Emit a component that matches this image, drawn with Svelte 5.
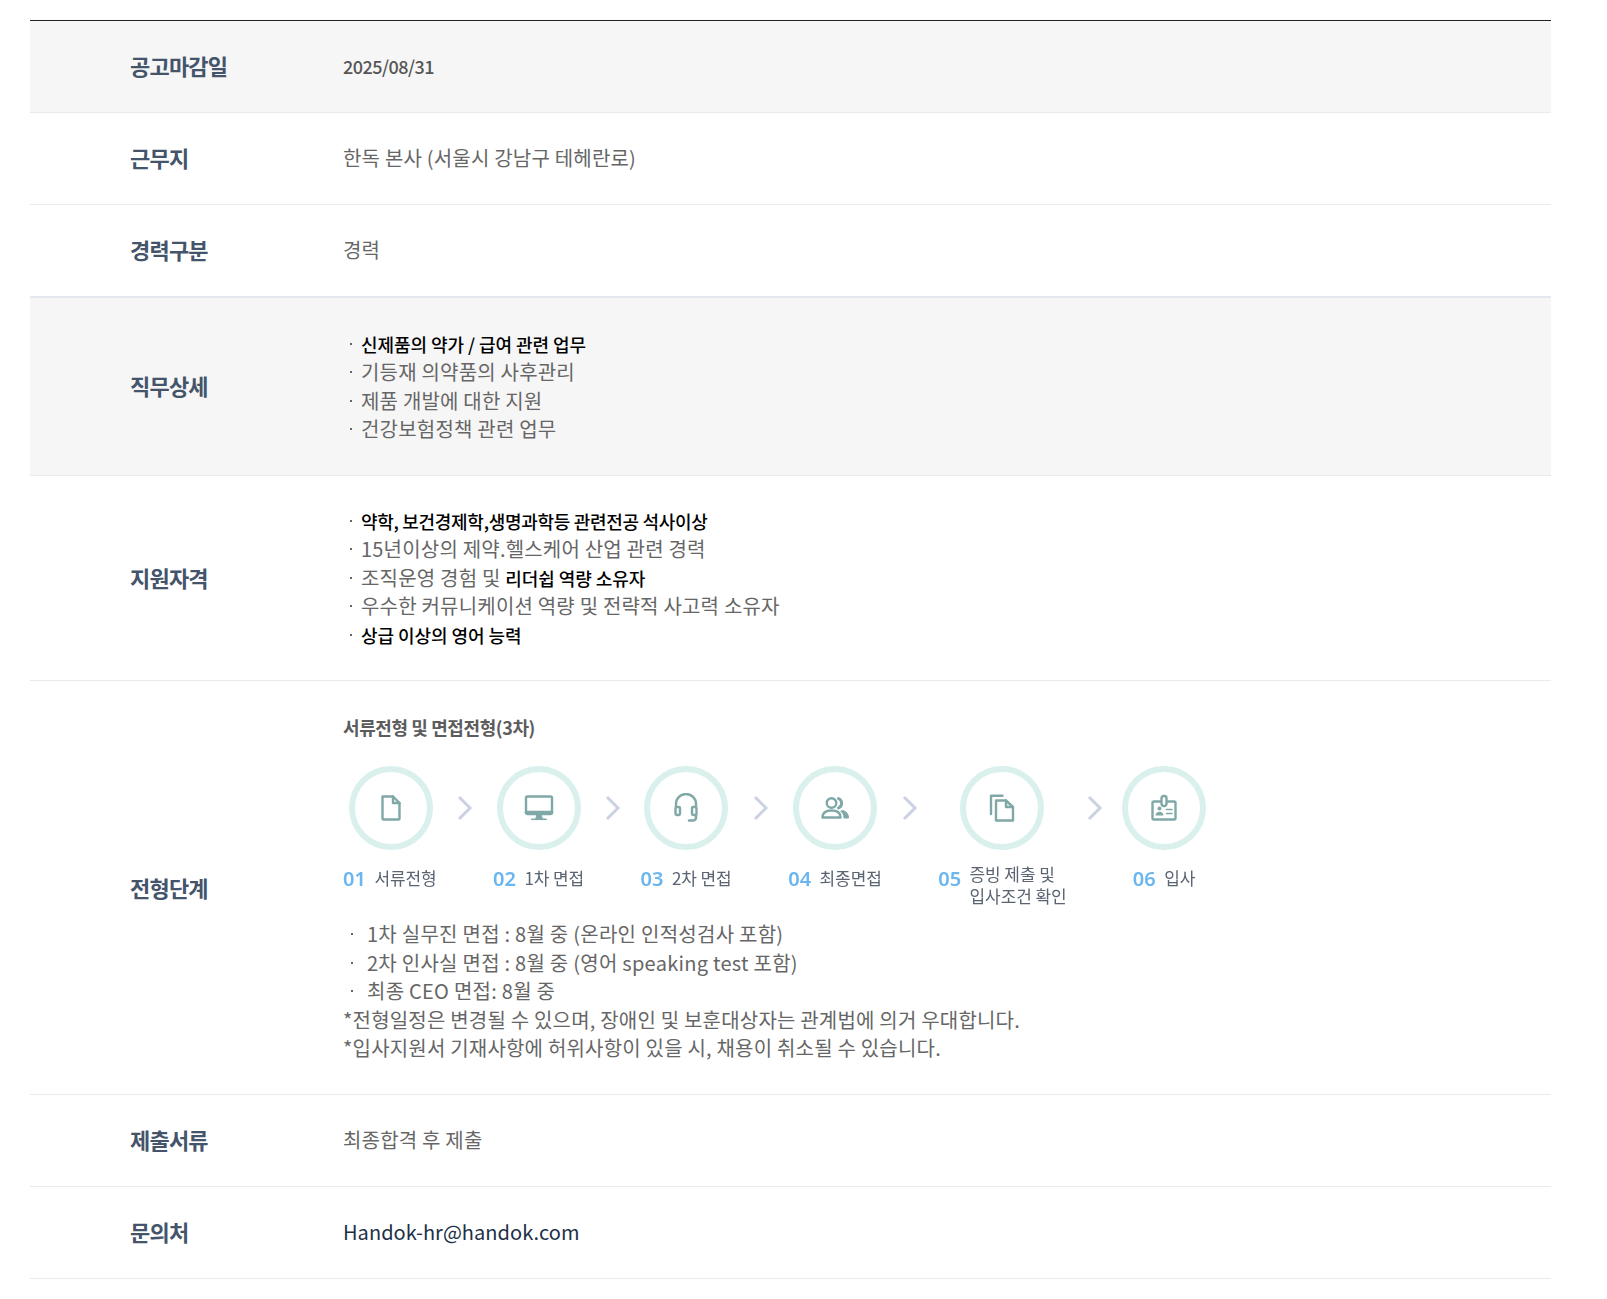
<script>
  const steps = [
    { n: '01', t: ['서류전형'], icon: 'doc', w: 150, off: 5.5, chev: 24.5 },
    { n: '02', t: ['1차 면접'], icon: 'monitor', w: 147.6, off: 4, chev: 24 },
    { n: '03', t: ['2차 면접'], icon: 'head', w: 147.6, off: 3.5, chev: 24.5 },
    { n: '04', t: ['최종면접'], icon: 'people', w: 150, off: 5, chev: 25 },
    { n: '05', t: ['증빙 제출 및', '입사조건 확인'], icon: 'docs', w: 194.6, off: 22, chev: 43 },
    { n: '06', t: ['입사'], icon: 'badge', w: 120, off: -10.4, chev: 0 }
  ];
</script>

<div class="page">
  <div class="table">
    <div class="row gray h92">
      <div class="label">공고마감일</div>
      <div class="value date">2025/08/31</div>
    </div>
    <div class="row h92">
      <div class="label">근무지</div>
      <div class="value">한독 본사 (서울시 강남구 테헤란로)</div>
    </div>
    <div class="row h93 strong-line">
      <div class="label">경력구분</div>
      <div class="value">경력</div>
    </div>
    <div class="row gray duty">
      <div class="label">직무상세</div>
      <div class="value list">
        <div class="li"><b>신제품의 약가 / 급여 관련 업무</b></div>
        <div class="li">기등재 의약품의 사후관리</div>
        <div class="li">제품 개발에 대한 지원</div>
        <div class="li">건강보험정책 관련 업무</div>
      </div>
    </div>
    <div class="row qual">
      <div class="label">지원자격</div>
      <div class="value list">
        <div class="li"><b class="tight">약학, 보건경제학,생명과학등 관련전공 석사이상</b></div>
        <div class="li">15년이상의 제약.헬스케어 산업 관련 경력</div>
        <div class="li">조직운영 경험 및 <b>리더쉽 역량 소유자</b></div>
        <div class="li">우수한 커뮤니케이션 역량 및 전략적 사고력 소유자</div>
        <div class="li"><b>상급 이상의 영어 능력</b></div>
      </div>
    </div>
    <div class="row process">
      <div class="label">전형단계</div>
      <div class="value proc-value">
        <div class="proc-title">서류전형 및 면접전형(3차)</div>
        <div class="steps">
          {#each steps as s, i}
            <div class="step" style="width:{s.w}px">
              <div class="top" style="margin-left:{s.off}px">
                <div class="circle">
                  <svg width="30" height="30" viewBox="0 0 30 30" fill="none" stroke="#7fa8a6" stroke-width="2.4" stroke-linejoin="round" stroke-linecap="round">
                    {#if s.icon === 'doc'}
                      <path d="M6.5 3.5h10.500l6.500 6.500v15.500a1 1 0 0 1-1 1h-15a1 1 0 0 1-1-1z" /><path d="M17 3.500v6.500h6.500" />
                    {:else if s.icon === 'monitor'}
                      <rect x="2" y="3.500" width="26" height="17.500" rx="1.500" /><path d="M2.500 19.500h25" stroke-width="3.600" /><path d="M13 22h4l1.500 4h4v.6h-15v-.6h4z" fill="#7fa8a6" stroke-width="1" />
                    {:else if s.icon === 'head'}
                      <path d="M5 14v-3a10 10 0 0 1 20 0v3" /><rect x="4.500" y="14" width="4.500" height="8" rx="1.200" /><rect x="21" y="14" width="4.500" height="8" rx="1.200" /><path d="M25 22v2.500a3 3 0 0 1-3 3h-4" stroke-width="2.600" />
                    {:else if s.icon === 'people'}
                      <circle cx="11.500" cy="10" r="4.800" /><path d="M2.500 24.500c0-5 3.500-7 9-7s9 2 9 7z" /><path d="M18.500 5.500a5.200 5.200 0 0 1 0 9.500" stroke-width="3" /><path d="M23 17.500c3.500 1.200 5.500 3.500 5.500 7.500h-4.500c0-3-1-5.500-3-6.500z" fill="#7fa8a6" stroke-width="1" />
                    {:else if s.icon === 'docs'}
                      <path d="M4 21V2.800h11.500" /><path d="M9 7.500h10l7 6.500v13.500H9z" /><path d="M19 7.500V14h7" />
                    {:else}
                      <rect x="3.500" y="8.500" width="23" height="18" rx="1.500" /><rect x="12.500" y="3" width="5" height="10" rx="2.200" fill="#fff" /><circle cx="10.500" cy="15.500" r="2" fill="#7fa8a6" stroke="none" /><path d="M6.500 22.500c0-5 8-5 8 0z" fill="#7fa8a6" stroke="none" /><path d="M17.500 16.500h5.500M17.500 20.500h5.500" stroke-width="1.600" />
                    {/if}
                  </svg>
                </div>
                {#if i < 5}
                  <svg class="chev" style="margin-left:{s.chev}px" width="16" height="26" viewBox="0 0 16 26" fill="none"><path d="M2 2l11 11L2 24" stroke="#cbd2e4" stroke-width="3" /></svg>
                {/if}
              </div>
              <div class="cap">
                <span class="num">{s.n}</span>
                <span class="txt" class:single={s.t.length === 1}>{#each s.t as l}<span class="ln">{l}</span>{/each}</span>
              </div>
            </div>
          {/each}
        </div>
        <div class="notes">
          <div class="note">1차 실무진 면접 : 8월 중 (온라인 인적성검사 포함)</div>
          <div class="note">2차 인사실 면접 : 8월 중 (영어 speaking test 포함)</div>
          <div class="note">최종 CEO 면접: 8월 중</div>
          <div>*전형일정은 변경될 수 있으며, 장애인 및 보훈대상자는 관계법에 의거 우대합니다.</div>
          <div>*입사지원서 기재사항에 허위사항이 있을 시, 채용이 취소될 수 있습니다.</div>
        </div>
      </div>
    </div>
    <div class="row h92">
      <div class="label">제출서류</div>
      <div class="value">최종합격 후 제출</div>
    </div>
    <div class="row h92">
      <div class="label">문의처</div>
      <div class="value mail">Handok-hr@handok.com</div>
    </div>
  </div>
</div>

<style>
  :global(body) { background: #fff; }
  .page {
    padding: 20px 56px 20px 30px;
    font-family: "Noto Sans CJK KR", "Noto Sans", sans-serif;
    color: #666;
  }
  .table { border-top: 1px solid #222; }
  .row {
    display: flex;
    align-items: center;
    border-bottom: 1px solid #e8eaef;
    box-sizing: border-box;
  }
  .gray { background: #f6f6f6; }
  .h92 { height: 92px; }
  .h93 { height: 93px; }
  .strong-line { border-bottom: 2px solid #e4e7ef; }
  .duty { height: 178px; }
  .qual { height: 205px; }
  .process { height: 414px; }
  .label {
    width: 313px;
    flex: none;
    box-sizing: border-box;
    padding: 0 0 3px 100px;
    font-size: 22px;
    font-weight: 700;
    letter-spacing: -0.8px;
    color: #44546a;
  }
  .process .label { padding-bottom: 1px; }
  .value {
    font-size: 20px;
    line-height: 28.5px;
    letter-spacing: 0.2px;
  }
  .date { font-size: 18px; font-weight: 500; letter-spacing: -0.5px; color: #555; }
  .mail { color: #1d3047; letter-spacing: 0.05px; }
  .li { position: relative; padding-left: 18px; }
  .li::before {
    content: "";
    position: absolute;
    left: 7px;
    top: 13px;
    width: 2px;
    height: 2px;
    background: #666;
  }
  .li b { font-size: 18px; font-weight: 500; color: #000; letter-spacing: -0.05px; }
  .li b.tight { letter-spacing: -0.3px; }
  .proc-value { align-self: flex-start; padding-top: 32px; }
  .proc-title { font-size: 18px; font-weight: 700; color: #5c5c5c; letter-spacing: -0.4px; line-height: 28px; margin-bottom: 25px; }
  .steps { display: flex; align-items: flex-start; filter: blur(0.3px); }
  .step { flex: none; }
  .top { display: flex; align-items: center; height: 84px; }
  .circle {
    width: 84px;
    height: 84px;
    box-sizing: border-box;
    border: 6px solid #d9f0ed;
    border-radius: 50%;
    display: flex;
    align-items: center;
    justify-content: center;
    flex: none;
  }
  .cap { display: flex; align-items: flex-start; margin-top: 15px; }
  .num { font-size: 20px; font-weight: 600; color: #6bb6ee; line-height: 28px; letter-spacing: 0; margin-right: 8.5px; font-family: "Noto Sans", sans-serif; }
  .txt { font-size: 17px; line-height: 22px; color: #5a6472; letter-spacing: -0.1px; margin-top: -2px; }
  .txt.single { margin-top: 2px; }
  .ln { display: block; white-space: nowrap; }
  .notes { margin-top: 13px; font-size: 20px; line-height: 28.5px; }
  .note { position: relative; padding-left: 24px; letter-spacing: 0.26px; }
  .note::before {
    content: "";
    position: absolute;
    left: 8px;
    top: 13px;
    width: 2px;
    height: 2px;
    background: #666;
  }
</style>
